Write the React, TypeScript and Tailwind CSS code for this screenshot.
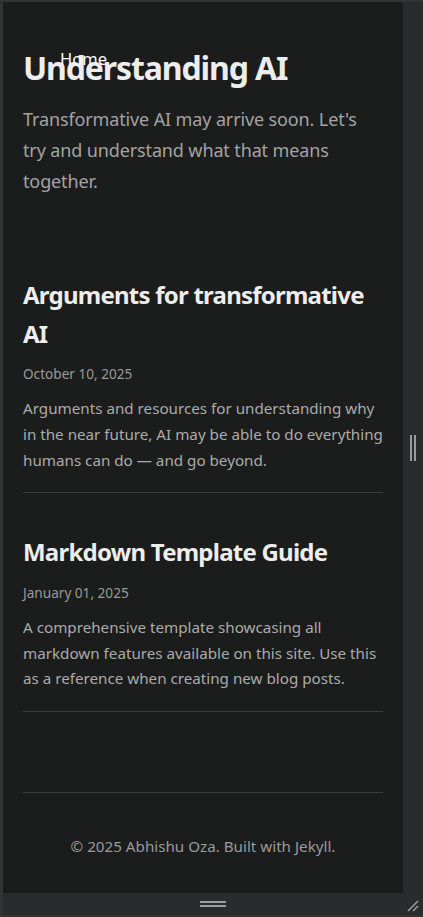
import React from "react";

const posts = [
  {
    title: "Arguments for transformative AI",
    date: "October 10, 2025",
    excerpt:
      "Arguments and resources for understanding why in the near future, AI may be able to do everything humans can do — and go beyond.",
  },
  {
    title: "Markdown Template Guide",
    date: "January 01, 2025",
    excerpt:
      "A comprehensive template showcasing all markdown features available on this site. Use this as a reference when creating new blog posts.",
  },
];

export default function App() {
  return (
    <div
      className="w-[423px] h-[917px] bg-[#333333] flex flex-col overflow-hidden"
      style={{ fontFamily: '"Noto Sans", "Open Sans", sans-serif' }}
    >
      <div className="flex flex-1 pt-[2px] pl-[3px] min-h-0">
        <div className="relative flex-1 bg-[#1b1c1c] flex flex-col px-5 min-w-0">
          <a className="absolute left-[57px] top-[45px] text-[16.5px] text-white leading-[24px]">Home</a>
          <h1 className="mt-[47px] text-[32px] leading-[1.2] font-bold text-[#ededed] tracking-[-0.035em]">
            Understanding AI
          </h1>
          <p className="mt-[17px] text-[18px] leading-[30.6px] text-[#a3a3a3] tracking-[-0.007em]">
            Transformative AI may arrive soon. Let's try and understand what that means together.
          </p>
          <div className="mt-[40px] flex flex-col">
            {posts.map((p) => (
              <div key={p.title} className="border-b border-[#3b3b3b] pt-[40px] pb-[19px]">
                <h2 className="text-[24px] leading-[38.4px] font-bold text-[#ededed] tracking-[-0.032em]">{p.title}</h2>
                <div className="mt-[11px] text-[13.6px] leading-[20px] text-[#9a9a9a]">{p.date}</div>
                <p className="mt-[12px] text-[15.2px] leading-[25.8px] text-[#ababab]">{p.excerpt}</p>
              </div>
            ))}
          </div>
          <footer className="mt-[80px] border-t border-[#3b3b3b] pt-[42px] text-center text-[15.2px] leading-[22px] text-[#9a9a9a]">
            © 2025 Abhishu Oza. Built with Jekyll.
          </footer>
        </div>
        <div className="w-[20px] bg-[#2a2b2d] flex items-center justify-center">
          <div className="flex gap-[2px] h-[26px] mt-[1px]">
            <div className="w-[2px] h-full bg-[#9a9a9a]" />
            <div className="w-[2px] h-full bg-[#9a9a9a]" />
          </div>
        </div>
      </div>
      <div className="h-[22px] bg-[#2a2b2d] ml-[3px] mb-[2px] relative flex items-center justify-center">
        <div className="flex flex-col gap-[2px] -mt-[1px]">
          <div className="w-[26px] h-[2px] bg-[#a0a0a0]" />
          <div className="w-[26px] h-[2px] bg-[#a0a0a0]" />
        </div>
        <svg className="absolute right-[4px] bottom-[3px]" width="12" height="12" viewBox="0 0 12 12">
          <line x1="1" y1="11" x2="11" y2="1" stroke="#a0a0a0" strokeWidth="1.5" />
          <line x1="6" y1="11" x2="11" y2="6" stroke="#a0a0a0" strokeWidth="1.5" />
        </svg>
      </div>
    </div>
  );
}
